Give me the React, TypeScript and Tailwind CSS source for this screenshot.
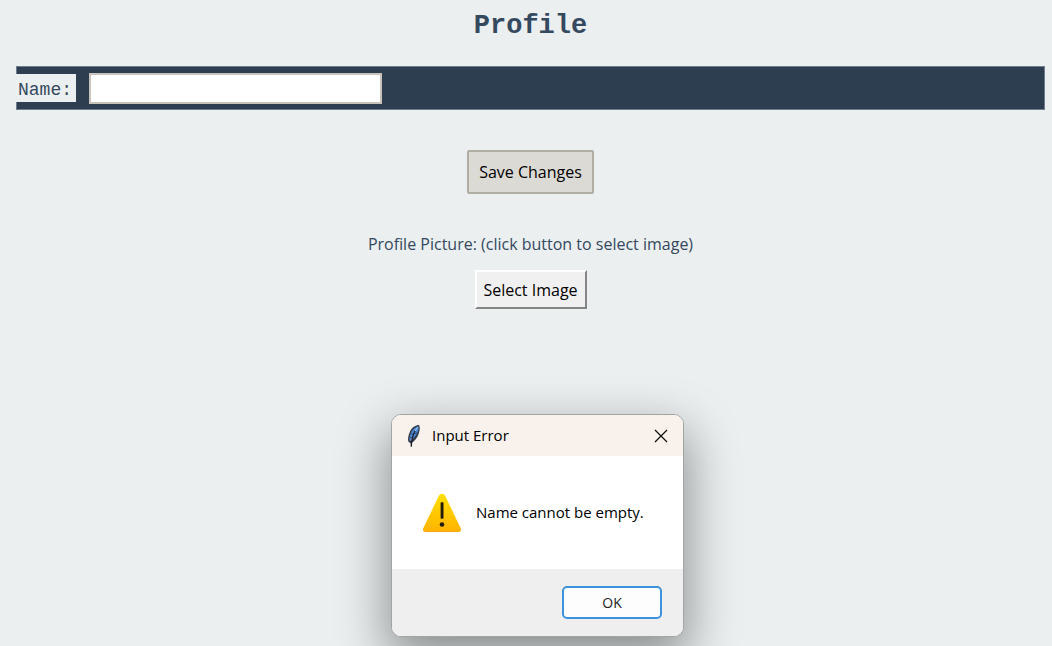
import { useState } from "react";

function FeatherIcon() {
  return (
    <svg width="16" height="24" viewBox="0 0 16 24" aria-hidden="true">
      <path
        d="M13 1C9.800 1 5.800 3.400 4 7.400 2.500 10.500 1.600 14.500 2.300 17.600L4.600 19.400C8.500 17.500 11.600 13.500 12.900 9.200 13.900 6 14.200 3 13 1Z"
        fill="#343b46"
      />
      <path
        d="M12.500 2.200C9.800 2.800 6.800 5 5.300 8.200 4.100 11 3.200 14 3.600 16.800 7.300 14.800 10.200 12 11.600 8.200 12.500 5.700 13 3.800 12.500 2.200Z"
        fill="#4a88dc"
      />
      <path d="M11.600 3.400C8.600 6.600 6.400 11 5 17" fill="none" stroke="#c9dcf3" strokeWidth="0.900" />
      <path d="M9 6.800C6.800 11 5.500 15.500 5.200 22.600" fill="none" stroke="#17202c" strokeWidth="1.400" />
      <path d="M5.300 9.800L7.200 10.400M4.300 13.200L6.200 13.800M9 10L11 8.600" stroke="#22344d" strokeWidth="0.900" />
    </svg>
  );
}

function WarningIcon() {
  return (
    <svg width="40" height="40" viewBox="0 0 40 40" aria-hidden="true">
      <defs>
        <linearGradient id="warning-fill" x1="0" y1="0" x2="0" y2="1">
          <stop offset="0" stopColor="#ffe000" />
          <stop offset="1" stopColor="#ffb300" />
        </linearGradient>
      </defs>
      <path
        d="M16.700 3Q17.900 .8 20 .8T23.300 3L38.500 34.800Q40.100 38.700 36.500 38.700H3.500Q-.1 38.700 1.500 34.800Z"
        fill="url(#warning-fill)"
      />
      <path d="M1.600 36.500Q1.800 38.400 3.700 38.400H36.300Q38.200 38.400 38.400 36.500" fill="none" stroke="#f0a000" strokeWidth="0.800" />
      <rect x="18.600" y="9.200" width="2.900" height="16.600" rx="0.800" fill="#211c10" />
      <circle cx="20" cy="31.500" r="2.300" fill="#211c10" />
    </svg>
  );
}

function ErrorDialog({ onClose }: { onClose: () => void }) {
  return (
    <div
      role="alertdialog"
      aria-labelledby="dialog-title"
      aria-describedby="dialog-message"
      className="absolute top-[414px] left-[391px] w-[293px] overflow-hidden rounded-[10px] border border-[#a3a5a5] bg-white text-black shadow-[0_20px_50px_4px_rgba(0,0,0,0.4)]"
    >
      <header className="flex h-[41px] items-center bg-[#f9f1eb] pr-3 pl-3.5">
        <FeatherIcon />
        <h2 id="dialog-title" className="ml-2.5 flex-1 text-[15px]">
          Input Error
        </h2>
        <button type="button" aria-label="Close" onClick={onClose} className="flex size-5 items-center justify-center">
          <svg width="14" height="14" viewBox="0 0 14 14" aria-hidden="true">
            <path d="M1 1L13 13M13 1L1 13" stroke="#111111" strokeWidth="1.300" />
          </svg>
        </button>
      </header>
      <div className="flex h-[113px] items-center gap-3.5 pl-[30px]">
        <WarningIcon />
        <p id="dialog-message" className="text-[15px]">
          Name cannot be empty.
        </p>
      </div>
      <footer className="flex h-[67px] items-center justify-end bg-[#efefef] pr-[21px]">
        <button
          type="button"
          onClick={onClose}
          className="h-[33px] w-[100px] rounded-[5px] border-2 border-[#3c93dc] bg-[#fdfdfd] text-[14px] text-[#222222]"
        >
          OK
        </button>
      </footer>
    </div>
  );
}

export default function App() {
  const [name, setName] = useState("");
  const [dialogOpen, setDialogOpen] = useState(true);

  return (
    <main className="relative min-h-screen overflow-hidden bg-[#ebeff0] pr-[7px] pl-4 font-['Open_Sans',sans-serif] text-[#34495e]">
      <form
        className="flex flex-col items-center"
        onSubmit={(event) => {
          event.preventDefault();
          setDialogOpen(name.trim() === "");
        }}
      >
        <h1 className="pt-2.5 font-['Liberation_Mono',monospace] text-[27px] leading-8 font-bold">Profile</h1>
        <div className="mt-6 flex h-11 w-full items-center border border-[#6f7d8b] bg-[#2c3e50]">
          <label
            htmlFor="name"
            className="-ml-px h-7 w-[60px] bg-[#ebeff0] pl-0.5 font-['Liberation_Mono',monospace] text-[18px] leading-8"
          >
            Name:
          </label>
          <input
            id="name"
            type="text"
            value={name}
            onChange={(event) => setName(event.target.value)}
            className="ml-[13px] h-[31px] w-[293px] border-2 border-[#c9c3ba] bg-white px-1 text-[16px] text-black outline-none"
          />
        </div>
        <button
          type="submit"
          className="mt-10 h-11 w-[127px] rounded-[2px] border-2 border-[#aeaca3] bg-[#dcdad5] text-[16px] text-black"
        >
          Save Changes
        </button>
        <p className="mt-[38px] text-[16px] leading-6">Profile Picture: (click button to select image)</p>
        <button
          type="button"
          className="mt-3.5 h-[39px] w-28 border-2 border-t-white border-r-[#858585] border-b-[#858585] border-l-white bg-[#f0f0f0] text-[16px] text-black"
        >
          Select Image
        </button>
      </form>
      {dialogOpen && <ErrorDialog onClose={() => setDialogOpen(false)} />}
    </main>
  );
}
